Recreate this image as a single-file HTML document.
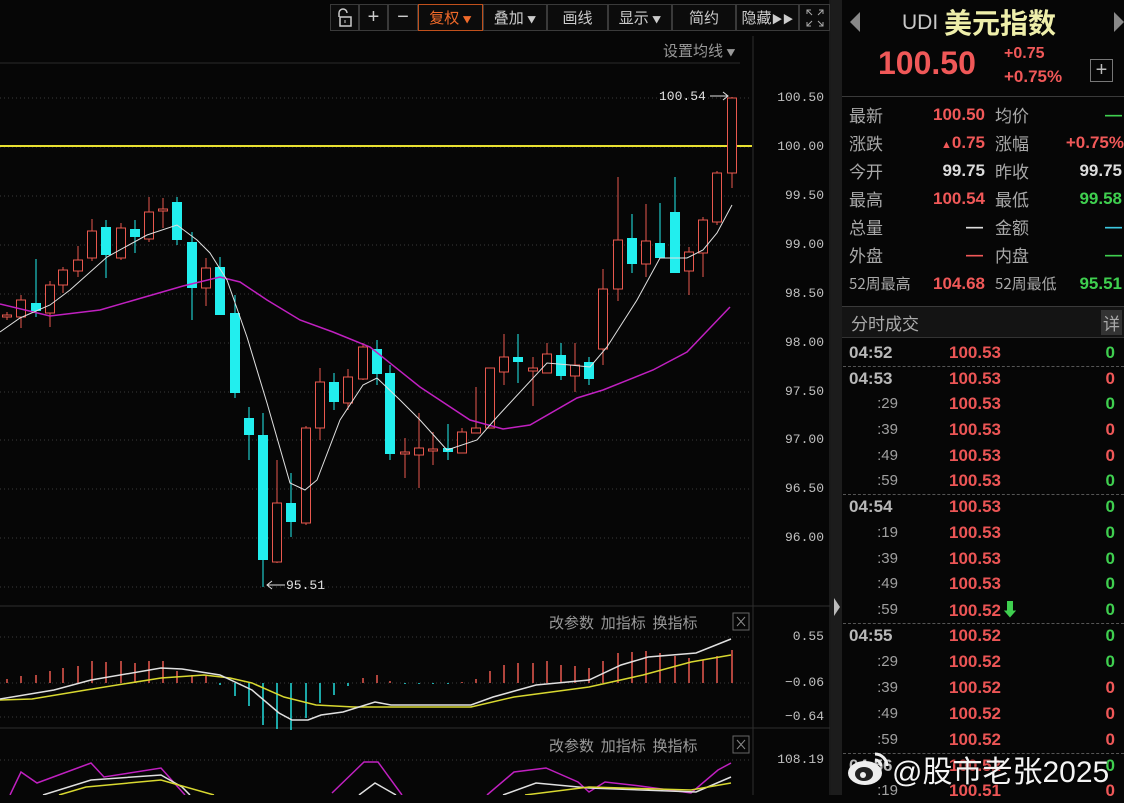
<!DOCTYPE html>
<html><head><meta charset="utf-8"><style>
*{margin:0;padding:0;box-sizing:border-box}
body{width:1124px;height:795px;background:#060606;overflow:hidden;position:relative;font-family:"Liberation Sans","Noto Sans CJK SC",sans-serif;color:#bbb}
.a{position:absolute;white-space:nowrap}
.cj{font-family:"Noto Sans CJK SC",sans-serif}
.btn{position:absolute;top:4px;height:27px;border:1px solid #3a3a3a;background:#0c0c0c;color:#ccc;font-size:15px;line-height:25px;text-align:center;font-family:"Noto Sans CJK SC",sans-serif}
.lb{position:absolute;left:849px;font-size:17px;color:#a8a8a8;font-family:"Noto Sans CJK SC",sans-serif;line-height:20px}
.vl{position:absolute;font-size:17px;font-weight:bold;text-align:right;line-height:20px}
.r{color:#f05858}.g{color:#3fcf4f}.w{color:#dcdcdc}
.row{position:absolute;left:842px;width:282px;height:24px;font-size:17px;font-weight:bold;line-height:24px}
.row .t{position:absolute;left:7px;color:#b8b8b8}
.row .s{position:absolute;right:226px;color:#a0a0a0;font-weight:normal;font-size:15px}
.row .p{position:absolute;left:107px;color:#ec5555}
.row .v{position:absolute;right:9px}
.dash{position:absolute;left:843px;width:281px;border-top:1px dashed #555}
.ax{position:absolute;right:300px;font-size:13px;color:#c0c0c0;font-family:"Liberation Mono",monospace}
.tl{font-size:15px;color:#999;font-family:"Noto Sans CJK SC",sans-serif}
</style></head><body>
<svg id="sv" class="a" style="left:0;top:0" width="832" height="795" xmlns="http://www.w3.org/2000/svg">
<g stroke="#3a3a3a" stroke-dasharray="1 3">
<line x1="0" y1="98" x2="752" y2="98"/><line x1="0" y1="147" x2="752" y2="147"/><line x1="0" y1="196" x2="752" y2="196"/><line x1="0" y1="245" x2="752" y2="245"/><line x1="0" y1="294" x2="752" y2="294"/><line x1="0" y1="343" x2="752" y2="343"/><line x1="0" y1="392" x2="752" y2="392"/><line x1="0" y1="440" x2="752" y2="440"/><line x1="0" y1="489" x2="752" y2="489"/><line x1="0" y1="538" x2="752" y2="538"/><line x1="0" y1="587" x2="752" y2="587"/>
<line x1="0" y1="637" x2="752" y2="637"/><line x1="0" y1="683" x2="752" y2="683"/><line x1="0" y1="717" x2="752" y2="717"/><line x1="0" y1="760" x2="752" y2="760"/>
</g>
<line x1="0" y1="63" x2="740" y2="63" stroke="#2a2a2a"/>
<line x1="753" y1="36" x2="753" y2="795" stroke="#2e2e2e"/>
<line x1="0" y1="606" x2="830" y2="606" stroke="#2e2e2e"/>
<line x1="0" y1="728" x2="830" y2="728" stroke="#2e2e2e"/>
<line x1="830" y1="0" x2="830" y2="795" stroke="#2e2e2e"/>
<line x1="0" y1="146" x2="752" y2="146" stroke="#e8e030" stroke-width="2"/>
<g id="cd"></g>
<polyline fill="none" stroke="#c020c0" stroke-width="1.5" points="0,304 50,316 100,310 183,286 220,277 240,282 267,300 300,320 333,332 370,347 420,387 470,420 503,429 530,425 577,398 603,390 653,370 687,352 730,307"/>
<polyline fill="none" stroke="#e0e0e0" stroke-width="1" points="0,332 20,318 50,305 70,290 107,257 147,235 177,225 197,240 210,253 227,280 247,337 267,403 290,483 305,490 317,480 340,420 363,385 377,378 400,400 420,420 447,450 477,440 497,417 547,363 570,365 590,367 607,347 637,300 660,258 687,258 703,250 717,233 732,205"/>
<g id="mb"></g>
<polyline fill="none" stroke="#d8d830" stroke-width="1.5" points="0,700 32,699 86,690 161,678 204,675 230,678 252,683 284,697 316,705 354,707 471,707 514,697 589,687 643,675 691,662 731,655"/>
<polyline fill="none" stroke="#e0e0e0" stroke-width="1.5" points="0,699 54,690 91,680 161,668 182,669 220,675 252,690 279,713 292,720 308,720 321,715 343,712 359,707 375,702 391,705 471,705 493,697 536,685 589,680 621,665 648,657 696,653 731,639"/>
<polyline fill="none" stroke="#c020c0" stroke-width="1.5" points="10,795 21,772 37,783 91,763 104,777 161,768 185,795"/>
<polyline fill="none" stroke="#c020c0" stroke-width="1.5" points="332,793 364,762 378,762 402,795"/>
<polyline fill="none" stroke="#c020c0" stroke-width="1.5" points="487,795 514,772 546,768 578,782 589,792 605,782 640,786 691,793 718,770 731,763"/>
<polyline fill="none" stroke="#e0e0e0" stroke-width="1.5" points="43,795 91,780 161,775 182,787 190,795"/>
<polyline fill="none" stroke="#e0e0e0" stroke-width="1.5" points="359,795 375,783 396,795"/>
<polyline fill="none" stroke="#e0e0e0" stroke-width="1.5" points="503,795 536,783 589,788 696,792 731,777"/>
<polyline fill="none" stroke="#d8d830" stroke-width="1.5" points="59,795 86,787 161,780 214,795"/>
<polyline fill="none" stroke="#d8d830" stroke-width="1.5" points="525,795 589,787 691,790 731,783"/>
<text x="659" y="100" fill="#e0e0e0" font-size="13" font-family="Liberation Mono,monospace">100.54</text>
<path d="M710 96H728M723 92L728 96L723 100" stroke="#e0e0e0" fill="none"/>
<path d="M267 585H285M272 581L267 585L272 589" stroke="#e0e0e0" fill="none"/>
<text x="286" y="589" fill="#e0e0e0" font-size="13" font-family="Liberation Mono,monospace">95.51</text>
<rect x="733" y="613" width="16" height="17" fill="none" stroke="#666"/><path d="M737 617L745 626M745 617L737 626" stroke="#888"/>
<rect x="733" y="736" width="16" height="17" fill="none" stroke="#666"/><path d="M737 740L745 749M745 740L737 749" stroke="#888"/>
</svg>
<script>
var C=[["r",7,315,317,312,320],["r",21,300,317,295,328],["c",36,303,311,259,317],["r",50,285,313,281,327],["r",63,270,285,267,293],["r",78,260,271,246,277],["r",92,231,258,219,261],["c",106,227,255,220,278],["r",121,228,258,223,260],["c",135,229,237,220,253],["r",149,212,239,197,242],["r",163,209,211,198,228],["c",177,202,240,197,245],["c",192,242,288,232,320],["r",206,268,288,258,306],["c",220,267,315,257,315],["c",235,313,393,295,398],["c",249,418,435,407,460],["c",263,435,560,413,587],["r",277,503,562,460,563],["c",291,503,522,473,537],["r",306,428,523,426,525],["r",320,382,428,368,440],["c",334,382,402,373,410],["r",348,377,403,369,410],["r",363,347,379,343,380],["c",377,349,374,340,385],["c",390,373,454,365,460],["r",405,452,454,438,478],["r",419,448,455,413,488],["r",433,449,451,432,465],["c",448,448,452,424,460],["r",462,432,453,428,453],["r",476,428,433,387,430],["r",490,368,428,368,428],["r",504,357,372,334,385],["c",518,357,362,334,383],["r",533,368,371,357,406],["r",547,354,373,343,373],["c",561,355,376,343,380],["r",575,365,376,343,392],["c",589,362,379,357,385],["r",603,289,349,269,365],["r",618,240,289,177,301],["c",632,238,264,214,273],["r",646,241,264,204,277],["c",660,243,258,203,258],["c",675,212,273,177,273],["r",689,252,271,247,295],["r",703,220,253,217,277],["r",717,173,222,171,225],["r",732,98,173,97,188]];
var s="";C.forEach(function(k){var col=k[0]=="r"?"#e8584e":"#22eeee";s+='<line x1="'+k[1]+'" y1="'+k[4]+'" x2="'+k[1]+'" y2="'+k[5]+'" stroke="'+col+'"/>';var h=Math.max(k[3]-k[2],1.5);if(k[0]=="r")s+='<rect x="'+(k[1]-4.5)+'" y="'+k[2]+'" width="9" height="'+h+'" fill="#060606" stroke="'+col+'"/>';else s+='<rect x="'+(k[1]-5)+'" y="'+k[2]+'" width="10" height="'+h+'" fill="'+col+'"/>';});
document.getElementById("cd").innerHTML=s;
var B=[4,7,8,12,15,17,22,21,22,20,22,22,12,8,7,-2,-13,-23,-42,-46,-47,-35,-20,-12,-3,5,8,2,-1,-1,-1,-1,1,4,12,18,20,20,22,18,17,15,22,30,31,32,30,27,25,23,27,33];
var m="";B.forEach(function(h,i){var x=C[i][1];m+='<line x1="'+x+'" y1="683" x2="'+x+'" y2="'+(683-h)+'" stroke="'+(h>0?"#e8584e":"#22dddd")+'" stroke-width="1.5"/>';});
document.getElementById("mb").innerHTML=m;
</script>
<!-- toolbar -->
<div class="btn" style="left:330px;width:29px"><svg width="18" height="20" viewBox="0 0 18 20" style="margin-top:3px"><path d="M3 9V5a4 4 0 0 1 8 0" fill="none" stroke="#ccc" stroke-width="1.5"/><rect x="4" y="9" width="11" height="9" fill="none" stroke="#ccc" stroke-width="1.5"/><path d="M9 12v3" stroke="#ccc"/></svg></div>
<div class="btn" style="left:359px;width:29px;font-size:20px;font-family:'Liberation Sans'">+</div>
<div class="btn" style="left:388px;width:30px;font-size:20px;font-family:'Liberation Sans'">−</div>
<div class="btn" style="left:418px;width:65px;border-color:#c0501c;color:#f06a2a">复权 <span style="font-size:9px">▼</span></div>
<div class="btn" style="left:483px;width:64px">叠加 <span style="font-size:9px">▼</span></div>
<div class="btn" style="left:547px;width:61px">画线</div>
<div class="btn" style="left:608px;width:64px">显示 <span style="font-size:9px">▼</span></div>
<div class="btn" style="left:672px;width:64px">简约</div>
<div class="btn" style="left:736px;width:63px">隐藏<span style="font-size:11px">▶▶</span></div>
<div class="btn" style="left:799px;width:31px;font-size:12px"><svg width="20" height="20" viewBox="0 0 20 20" style="margin-top:3px"><path d="M2 6V2h4M14 2h4v4M18 14v4h-4M6 18H2v-4M2 2l5 5M18 2l-5 5M18 18l-5-5M2 18l5-5" fill="none" stroke="#aaa"/></svg></div>
<div class="a tl" style="left:663px;top:40px">设置均线 <span style="font-size:9px">▼</span></div>
<!-- axis -->
<div class="ax" style="top:90px">100.50</div><div class="ax" style="top:139px">100.00</div><div class="ax" style="top:188px">99.50</div><div class="ax" style="top:237px">99.00</div><div class="ax" style="top:286px">98.50</div><div class="ax" style="top:335px">98.00</div><div class="ax" style="top:384px">97.50</div><div class="ax" style="top:432px">97.00</div><div class="ax" style="top:481px">96.50</div><div class="ax" style="top:530px">96.00</div>
<div class="ax" style="top:629px">0.55</div><div class="ax" style="top:675px">−0.06</div><div class="ax" style="top:709px">−0.64</div><div class="ax" style="top:752px">108.19</div>
<div class="a tl" style="left:549px;top:612px">改参数&nbsp;&nbsp;加指标&nbsp;&nbsp;换指标</div>
<div class="a tl" style="left:549px;top:735px">改参数&nbsp;&nbsp;加指标&nbsp;&nbsp;换指标</div>
<!-- scrollbar -->
<div class="a" style="left:831px;top:0;width:11px;height:795px;background:#1c1c1c"></div>
<div class="a" style="left:834px;top:598px;width:0;height:0;border-top:9px solid transparent;border-bottom:9px solid transparent;border-left:6px solid #bbb"></div>
<!-- right header -->
<div class="a" style="left:850px;top:12px;width:0;height:0;border-top:10px solid transparent;border-bottom:10px solid transparent;border-right:10px solid #888"></div>
<div class="a" style="left:1114px;top:12px;width:0;height:0;border-top:10px solid transparent;border-bottom:10px solid transparent;border-left:10px solid #888"></div>
<div class="a" style="left:902px;top:11px;font-size:21px;color:#c8c8c8">UDI</div>
<div class="a cj" style="left:944px;top:2px;font-size:28px;color:#eeeeaa;font-weight:bold">美元指数</div>
<div class="a" style="left:878px;top:45px;font-size:32px;color:#f05858;font-weight:bold">100.50</div>
<div class="a" style="left:1004px;top:45px;font-size:16px;color:#f05858;font-weight:bold">+0.75</div>
<div class="a" style="left:1004px;top:67px;font-size:17px;color:#f05858;font-weight:bold">+0.75%</div>
<div class="a" style="left:1090px;top:59px;width:23px;height:23px;border:1px solid #777;color:#bbb;font-size:20px;line-height:20px;text-align:center">+</div>
<div class="a" style="left:842px;top:96px;width:282px;border-top:1px solid #3a3a3a"></div>
<div class="lb" style="top:105px">最新</div><div class="vl r" style="top:105px;right:139px">100.50</div><div class="lb" style="left:995px;top:105px">均价</div><div class="vl g" style="top:105px;right:2px">—</div>
<div class="lb" style="top:133px">涨跌</div><div class="vl r" style="top:133px;right:139px"><span style="font-size:11px">▲</span>0.75</div><div class="lb" style="left:995px;top:133px">涨幅</div><div class="vl r" style="top:133px;right:0">+0.75%</div>
<div class="lb" style="top:161px">今开</div><div class="vl w" style="top:161px;right:139px">99.75</div><div class="lb" style="left:995px;top:161px">昨收</div><div class="vl w" style="top:161px;right:2px">99.75</div>
<div class="lb" style="top:189px">最高</div><div class="vl r" style="top:189px;right:139px">100.54</div><div class="lb" style="left:995px;top:189px">最低</div><div class="vl g" style="top:189px;right:2px">99.58</div>
<div class="lb" style="top:217px">总量</div><div class="vl w" style="top:217px;right:141px">—</div><div class="lb" style="left:995px;top:217px">金额</div><div class="vl" style="top:217px;right:2px;color:#3cc8e0">—</div>
<div class="lb" style="top:245px">外盘</div><div class="vl r" style="top:245px;right:141px">—</div><div class="lb" style="left:995px;top:245px">内盘</div><div class="vl g" style="top:245px;right:2px">—</div>
<div class="lb" style="top:274px;font-size:15px">52周最高</div><div class="vl r" style="top:274px;right:139px">104.68</div><div class="lb" style="left:995px;top:274px;font-size:15px">52周最低</div><div class="vl g" style="top:274px;right:2px">95.51</div>
<div class="a" style="left:842px;top:306px;width:282px;height:32px;background:#141414;border-top:1px solid #3a3a3a;border-bottom:1px solid #333"></div>
<div class="a cj" style="left:851px;top:310px;font-size:17px;color:#aaa">分时成交</div>
<div class="a cj" style="left:1101px;top:310px;font-size:17px;color:#aaa;background:#333;padding:0 2px">详</div>
<div class="row" style="top:341px"><span class="t">04:52</span><span class="p">100.53</span><span class="v g">0</span></div>
<div class="dash" style="top:366px"></div>
<div class="row" style="top:367px"><span class="t">04:53</span><span class="p">100.53</span><span class="v r">0</span></div>
<div class="row" style="top:392px"><span class="s">:29</span><span class="p">100.53</span><span class="v g">0</span></div>
<div class="row" style="top:418px"><span class="s">:39</span><span class="p">100.53</span><span class="v r">0</span></div>
<div class="row" style="top:444px"><span class="s">:49</span><span class="p">100.53</span><span class="v r">0</span></div>
<div class="row" style="top:469px"><span class="s">:59</span><span class="p">100.53</span><span class="v g">0</span></div>
<div class="dash" style="top:494px"></div>
<div class="row" style="top:495px"><span class="t">04:54</span><span class="p">100.53</span><span class="v g">0</span></div>
<div class="row" style="top:521px"><span class="s">:19</span><span class="p">100.53</span><span class="v g">0</span></div>
<div class="row" style="top:547px"><span class="s">:39</span><span class="p">100.53</span><span class="v g">0</span></div>
<div class="row" style="top:572px"><span class="s">:49</span><span class="p">100.53</span><span class="v g">0</span></div>
<div class="row" style="top:598px"><span class="s">:59</span><span class="p">100.52<span class="g" style="font-size:18px">⬇</span></span><span class="v g">0</span></div>
<div class="dash" style="top:623px"></div>
<div class="row" style="top:624px"><span class="t">04:55</span><span class="p">100.52</span><span class="v g">0</span></div>
<div class="row" style="top:650px"><span class="s">:29</span><span class="p">100.52</span><span class="v g">0</span></div>
<div class="row" style="top:676px"><span class="s">:39</span><span class="p">100.52</span><span class="v r">0</span></div>
<div class="row" style="top:702px"><span class="s">:49</span><span class="p">100.52</span><span class="v r">0</span></div>
<div class="row" style="top:728px"><span class="s">:59</span><span class="p">100.52</span><span class="v r">0</span></div>
<div class="dash" style="top:753px"></div>
<div class="row" style="top:754px"><span class="t">04:56</span><span class="p">100.52</span><span class="v g">0</span></div>
<div class="row" style="top:779px"><span class="s">:19</span><span class="p">100.51</span><span class="v r">0</span></div>
<!-- watermark -->
<svg class="a" style="left:845px;top:748px" width="48" height="40" viewBox="0 0 48 40"><ellipse cx="20" cy="25" rx="17" ry="12" fill="#eee"/><ellipse cx="19" cy="26" rx="9" ry="7" fill="#222"/><circle cx="18" cy="27" r="3" fill="#eee"/><path d="M30 6a12 12 0 0 1 12 12M30 12a6 6 0 0 1 6 6" fill="none" stroke="#eee" stroke-width="3"/></svg>
<div class="a" style="left:892px;top:747px;font-size:30px;color:#f4f4f4;font-family:'Liberation Sans','Noto Sans CJK SC',sans-serif;text-shadow:0 0 2px #000">@股市老张2025</div>
</body></html>
